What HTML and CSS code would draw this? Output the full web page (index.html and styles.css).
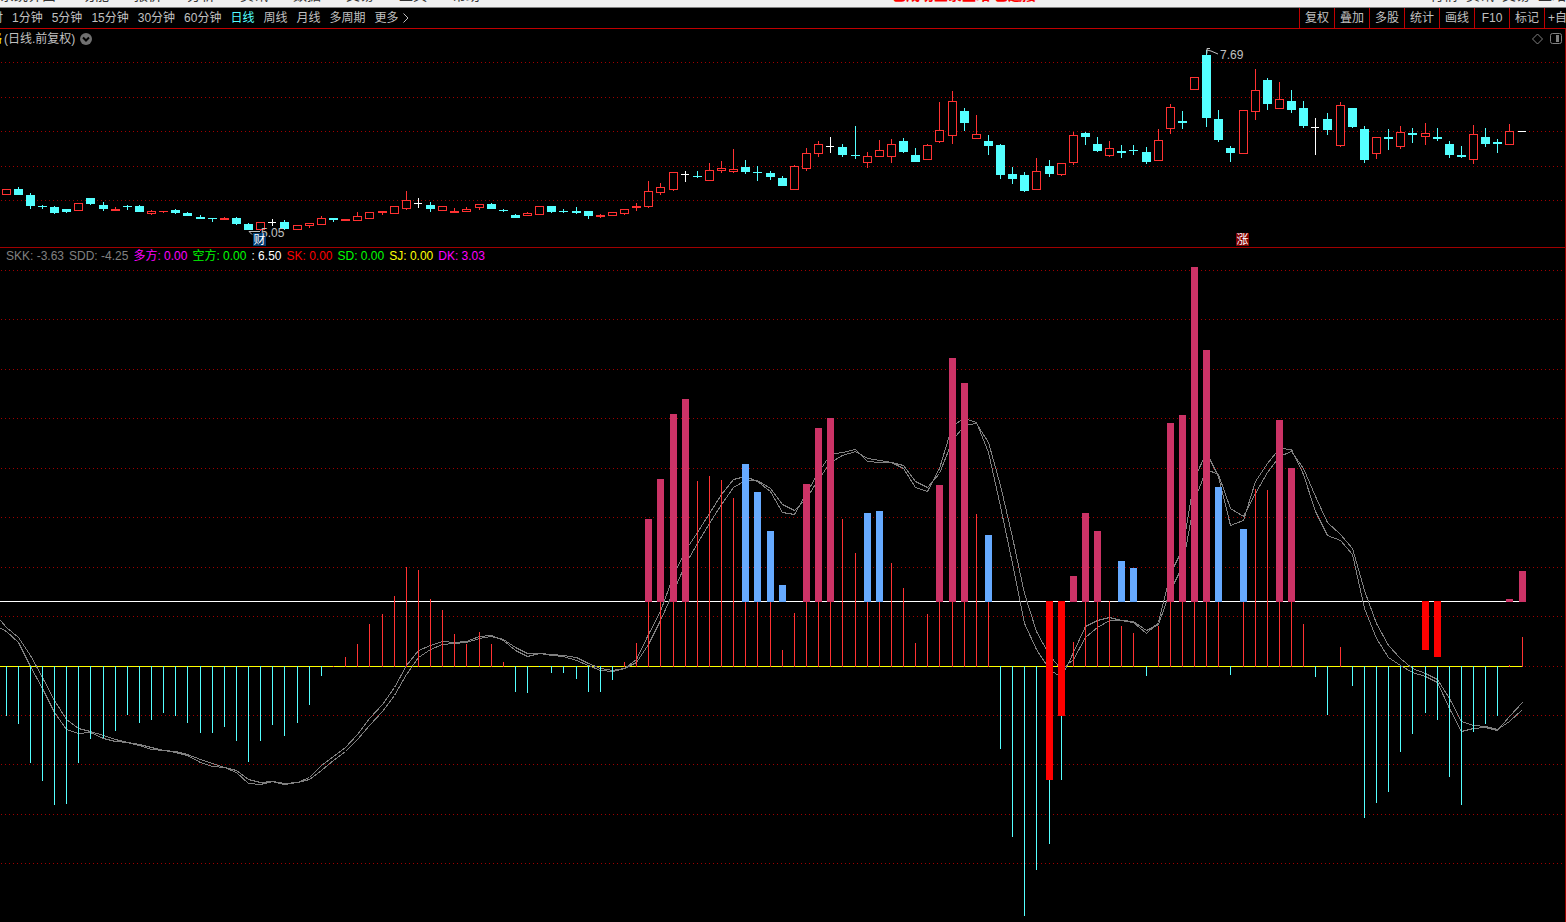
FILE: index.html
```html
<!DOCTYPE html>
<html lang="zh-CN">
<head>
    <meta charset="UTF-8">
    <meta name="viewport" content="width=device-width, initial-scale=1.0">
    <title>日线</title>
    <link rel="stylesheet" href="styles.css">
</head>
<body>
    <!-- Main menu, scrolled almost out of view -->
    <div class="menu-strip">
        <div class="menu-items">
            <span>系统界面</span>
            <span>功能</span>
            <span>报价</span>
            <span>分析</span>
            <span>资讯</span>
            <span>数据</span>
            <span>交易</span>
            <span>工具</span>
            <span>帮助</span>
        </div>
        <div class="menu-notice">已成功登录主站 已连接</div>
        <div class="menu-right">
            <span>行情</span>
            <span>资讯</span>
            <span>交易</span>
            <span>主站</span>
        </div>
    </div>

    <nav class="toolbar">
        <div class="periods">
            <button type="button" class="period cut">时</button>
            <button type="button" class="period">1分钟</button>
            <button type="button" class="period">5分钟</button>
            <button type="button" class="period">15分钟</button>
            <button type="button" class="period">30分钟</button>
            <button type="button" class="period">60分钟</button>
            <button type="button" class="period active">日线</button>
            <button type="button" class="period">周线</button>
            <button type="button" class="period">月线</button>
            <button type="button" class="period">多周期</button>
            <button type="button" class="period more">更多
                <svg width="6" height="10" viewBox="0 0 6 10"><path d="M0.5 0.5 L5 5 L0.5 9.5"/></svg>
            </button>
        </div>
        <div class="tools">
            <button type="button" class="tool">复权</button>
            <button type="button" class="tool">叠加</button>
            <button type="button" class="tool">多股</button>
            <button type="button" class="tool">统计</button>
            <button type="button" class="tool">画线</button>
            <button type="button" class="tool">F10</button>
            <button type="button" class="tool">标记</button>
            <button type="button" class="tool last">+自</button>
        </div>
    </nav>

    <main class="charts">
        <section class="price-panel">
            <header class="panel-title">
                <span class="stock-name">格</span>
                <span>(日线.前复权)</span>
                <svg class="title-toggle" width="12" height="12" viewBox="0 0 12 12">
                    <circle cx="6" cy="6" r="6"/>
                    <path d="M3 4.5 L6 7.5 L9 4.5"/>
                </svg>
                <svg class="title-icons" width="30" height="12" viewBox="0 0 30 12">
                    <path d="M5.5 1 L10.5 6 L5.5 11 L0.5 6 Z"/>
                    <rect x="18.5" y="0.5" width="11" height="10" rx="2"/>
                    <rect class="fill" x="24" y="2" width="3" height="7"/>
                </svg>
            </header>
            <svg id="priceChart"></svg>
        </section>

        <section class="indicator-panel">
            <div class="legend">
                <span class="gray">SKK: -3.63</span>
                <span class="gray">SDD: -4.25</span>
                <span class="magenta">多方: 0.00</span>
                <span class="green">空方: 0.00</span>
                <span class="white">: 6.50</span>
                <span class="red">SK: 0.00</span>
                <span class="green">SD: 0.00</span>
                <span class="yellow">SJ: 0.00</span>
                <span class="magenta">DK: 3.03</span>
            </div>
            <svg id="indicatorChart"></svg>
        </section>
    </main>

    <script src="chart.js"></script>
</body>
</html>
```

FILE: styles.css
```css
/* General Styles */
* {
    box-sizing: border-box;
}

body {
    margin: 0;
    height: 100vh;
    display: flex;
    flex-direction: column;
    overflow: hidden;
    background: #000;
    color: #c0c0c0;
    font-family: "Liberation Sans", "Noto Sans CJK SC", sans-serif;
    font-size: 12px;
}

button {
    padding: 0;
    border: none;
    background: none;
    color: inherit;
    font: inherit;
    line-height: 21px;
    white-space: nowrap;
    cursor: pointer;
}

svg {
    display: block;
}

/* Menu strip */
.menu-strip {
    flex: none;
    display: flex;
    align-items: flex-end;
    justify-content: space-between;
    height: 8px;
    padding-bottom: 4px;
    overflow: hidden;
    background: #f0f0f0;
    border-bottom: 1px solid #808080;
    color: #333;
    font-size: 14px;
    line-height: 16px;
    white-space: nowrap;
}

.menu-items,
.menu-right {
    display: flex;
    gap: 25px;
}

.menu-right {
    gap: 8px;
}

.menu-notice {
    flex: 1;
    padding-left: 412px;
    color: #f00;
    font-weight: bold;
}

/* Toolbar */
.toolbar {
    flex: none;
    display: flex;
    justify-content: space-between;
    height: 21px;
    overflow: hidden;
    border-bottom: 1px solid #c00000;
}

.periods {
    display: flex;
    gap: 9px;
}

.period.cut {
    width: 3px;
    direction: rtl;
    overflow: hidden;
}

.period.active {
    color: #54ffff;
}

.period.more {
    display: flex;
    align-items: center;
    gap: 4px;
}

.period svg {
    fill: none;
    stroke: #c0c0c0;
}

.tools {
    display: flex;
}

.tool {
    width: 35px;
    border-left: 1px solid #c00000;
}

.tool.last {
    width: 22px;
    padding-left: 3px;
    overflow: hidden;
    text-align: left;
}

/* Charts */
.charts {
    flex: 1;
    min-height: 0;
    display: flex;
    flex-direction: column;
    border-right: 1px solid #a00000;
}

.price-panel {
    flex: none;
    border-bottom: 1px solid #a00000;
}

.panel-title {
    display: flex;
    align-items: center;
    height: 19px;
    line-height: 20px;
}

.stock-name {
    width: 2px;
    margin-right: 2px;
    overflow: hidden;
    direction: rtl;
    color: #ff0;
    white-space: nowrap;
}

.title-toggle {
    margin-left: 5px;
    fill: #707070;
}

.title-toggle path {
    fill: none;
    stroke: #000;
    stroke-width: 2;
}

.title-icons {
    margin-left: auto;
    margin-right: 3px;
    fill: none;
    stroke: #808080;
}

.title-icons .fill {
    fill: #808080;
    stroke: none;
}

#priceChart {
    width: 100%;
    height: 199px;
}

.indicator-panel {
    flex: 1;
    min-height: 0;
    display: flex;
    flex-direction: column;
}

.legend {
    flex: none;
    display: flex;
    gap: 5px;
    height: 16px;
    padding-left: 6px;
    line-height: 16px;
    white-space: nowrap;
}

#indicatorChart {
    flex: 1;
    min-height: 0;
    width: 100%;
}

.gray { color: #808080; }
.magenta { color: #f0f; }
.green { color: #0f0; }
.white { color: #fff; }
.red { color: #f00; }
.yellow { color: #ff0; }

/* Chart shapes */
.grid {
    stroke: #a00000;
    stroke-dasharray: 1 3;
    stroke-dashoffset: -1;
    shape-rendering: crispEdges;
}

.curve {
    fill: none;
    stroke: #808080;
    shape-rendering: crispEdges;
}

.up {
    fill: #ff3232;
}

.up-body {
    fill: #000;
    stroke: #ff3232;
}

.down {
    fill: #54ffff;
}

.flat {
    fill: #fff;
}

.zero {
    fill: #ff0;
}

.bar-strong {
    fill: #cc3366;
}

.bar-weak {
    fill: #66aaff;
}

.bar-below {
    fill: #f00;
}

.mark {
    fill: none;
    stroke: #c0c0c0;
}

.mark-text {
    fill: #c0c0c0;
}

.badge-text {
    fill: #fff;
    font-size: 12px;
    text-anchor: middle;
}

.badge-news {
    fill: #003a70;
}

.badge-rise {
    fill: #800000;
}
```

FILE: chart.js
```js
const NS = 'http://www.w3.org/2000/svg';
const priceChart = document.getElementById('priceChart');
const indicatorChart = document.getElementById('indicatorChart');

// [type, high, body top, body bottom, low]  r = up, c = down, w = flat
const candles = [
    ['r', 189, 189, 195, 195], ['c', 187, 189, 195, 195], ['c', 193, 195, 206, 209], ['c', 205, 206, 207, 209],
    ['c', 206, 207, 213, 214], ['c', 209, 209, 212, 213], ['r', 203, 203, 211, 211], ['c', 198, 198, 204, 205],
    ['c', 202, 205, 209, 211], ['r', 207, 209, 211, 211], ['c', 205, 206, 207, 210], ['c', 205, 206, 212, 212],
    ['r', 210, 211, 214, 215], ['r', 211, 211, 212, 213], ['c', 209, 210, 213, 214], ['c', 212, 213, 216, 216],
    ['c', 215, 217, 219, 219], ['c', 218, 218, 219, 222], ['r', 217, 218, 220, 220], ['c', 217, 218, 224, 225],
    ['c', 223, 224, 230, 230], ['r', 222, 222, 230, 231], ['w', 219, 222, 223, 226], ['c', 220, 222, 229, 230],
    ['r', 225, 225, 230, 230], ['r', 223, 223, 226, 228], ['r', 216, 218, 225, 225], ['c', 218, 218, 220, 222],
    ['r', 219, 219, 221, 221], ['r', 212, 216, 221, 221], ['r', 212, 212, 219, 219], ['r', 211, 211, 213, 215],
    ['r', 206, 206, 214, 214], ['r', 191, 200, 209, 210], ['w', 198, 203, 204, 208], ['c', 202, 205, 209, 212],
    ['r', 206, 206, 211, 211], ['r', 208, 211, 213, 213], ['r', 207, 209, 212, 212], ['r', 204, 204, 208, 210],
    ['c', 203, 204, 209, 209], ['c', 209, 210, 211, 212], ['c', 214, 215, 218, 218], ['r', 212, 213, 216, 216],
    ['r', 206, 206, 215, 215], ['c', 206, 206, 212, 213], ['c', 209, 211, 212, 213], ['c', 207, 211, 213, 214],
    ['c', 211, 211, 216, 219], ['r', 214, 215, 217, 218], ['r', 212, 212, 216, 216], ['r', 209, 209, 214, 215],
    ['r', 203, 206, 208, 211], ['r', 181, 191, 207, 208], ['r', 183, 187, 193, 195], ['r', 172, 172, 190, 191],
    ['w', 171, 174, 175, 182], ['c', 171, 176, 177, 178], ['r', 163, 170, 181, 181], ['r', 161, 168, 171, 173],
    ['r', 149, 169, 172, 173], ['c', 160, 167, 172, 174], ['c', 166, 172, 173, 181], ['c', 171, 173, 177, 180],
    ['c', 176, 178, 186, 186], ['r', 165, 166, 190, 190], ['r', 148, 153, 169, 171], ['r', 141, 144, 154, 157],
    ['w', 137, 146, 147, 153], ['c', 144, 147, 155, 157], ['c', 126, 155, 156, 159], ['r', 152, 156, 163, 168],
    ['r', 140, 150, 157, 157], ['r', 139, 144, 157, 163], ['c', 138, 141, 152, 153], ['c', 148, 155, 162, 162],
    ['r', 144, 145, 160, 160], ['r', 102, 130, 142, 143], ['r', 91, 101, 136, 144], ['c', 108, 111, 123, 131],
    ['r', 115, 134, 139, 139], ['c', 135, 141, 146, 155], ['c', 144, 145, 175, 179], ['c', 167, 174, 179, 184],
    ['c', 172, 175, 191, 192], ['r', 158, 171, 190, 190], ['c', 160, 166, 174, 177], ['r', 163, 163, 175, 176],
    ['r', 132, 135, 163, 165], ['c', 132, 133, 137, 145], ['c', 137, 144, 151, 152], ['r', 141, 148, 156, 157],
    ['c', 145, 151, 153, 158], ['c', 145, 150, 151, 155], ['c', 147, 152, 162, 164], ['r', 129, 140, 161, 161],
    ['r', 104, 107, 129, 134], ['c', 111, 121, 123, 129], ['r', 77, 77, 90, 90], ['c', 50, 55, 118, 127],
    ['c', 110, 119, 140, 142], ['c', 146, 148, 153, 162], ['r', 110, 110, 154, 154], ['r', 69, 90, 112, 120],
    ['c', 78, 80, 104, 110], ['r', 82, 99, 109, 109], ['c', 90, 101, 110, 113], ['c', 101, 108, 126, 128],
    ['w', 118, 127, 128, 155], ['c', 113, 119, 130, 135], ['r', 102, 105, 146, 147], ['c', 108, 108, 127, 128],
    ['c', 126, 129, 160, 163], ['r', 137, 137, 154, 159], ['c', 129, 137, 139, 150], ['r', 126, 132, 147, 149],
    ['c', 128, 133, 135, 143], ['r', 123, 133, 137, 145], ['c', 128, 137, 139, 141], ['c', 141, 144, 155, 158],
    ['c', 146, 155, 157, 158], ['r', 125, 134, 160, 164], ['c', 128, 137, 144, 147], ['c', 139, 142, 144, 153],
    ['r', 124, 131, 145, 145], ['w', 131, 131, 132, 132]
];

const ZERO = 666;
const BASE = 601;

// Tip of each thin stick, measured from the zero line
const sticks = [
    716, 724, 763, 781, 805, 804, 763, 739, 738, 731, 715, 723, 720, 713, 716, 723,
    733, 733, 727, 741, 762, 741, 725, 736, 723, 705, 676, 666, 657, 644, 624, 614,
    596, 567, 570, 599, 610, 634, 644, 632, 644, 662, 692, 693, 667, 673, 673, 679,
    692, 692, 680, 662, 643, 601, 601, 601, 601, 481, 476, 480, 498, 601, 601, 601,
    650, 613, 601, 601, 601, 519, 553, 601, 601, 563, 588, 643, 614, 601, 601, 601,
    514, 601, 749, 837, 916, 870, 844, 780, 642, 601, 601, 601, 626, 633, 676, 626,
    601, 601, 601, 601, 601, 675, 601, 489, 490, 601, 601, 624, 677, 715, 647, 686,
    818, 803, 792, 752, 734, 713, 720, 777, 805, 732, 724, 716, 665, 637
];

// Thick bars on the base line: [index, tip]
const strongBars = [
    [53, 519], [54, 479], [55, 414], [56, 399], [66, 484], [67, 428], [68, 418],
    [77, 485], [78, 358], [79, 383], [88, 576], [89, 513], [90, 531], [96, 423],
    [97, 415], [98, 267], [99, 350], [105, 420], [106, 468], [124, 599], [125, 571]
];
const weakBars = [
    [61, 464], [62, 492], [63, 531], [64, 585], [71, 513], [72, 511],
    [81, 535], [92, 561], [93, 568], [100, 487], [102, 529]
];
const belowBars = [[86, 780], [87, 716], [117, 650], [118, 657]];

const skk = [
    631, 642, 666, 688, 712, 729, 733, 732, 738, 741, 742, 745, 749, 750, 752, 755,
    762, 766, 767, 772, 783, 784, 781, 784, 782, 777, 765, 756, 747, 734, 718, 704,
    687, 665, 650, 645, 641, 642, 641, 636, 635, 640, 650, 656, 653, 655, 656, 660,
    665, 670, 671, 668, 659, 634, 611, 575, 550, 532, 513, 494, 479, 476, 481, 491,
    512, 514, 493, 472, 454, 452, 449, 461, 462, 462, 468, 487, 491, 468, 425, 418,
    422, 452, 506, 563, 623, 649, 669, 677, 652, 626, 620, 617, 620, 622, 633, 622,
    573, 549, 478, 452, 476, 525, 520, 481, 463, 448, 449, 474, 511, 535, 540, 554,
    608, 638, 657, 665, 672, 676, 682, 708, 731, 728, 727, 730, 716, 702
];
const sdd = [
    627, 637, 655, 677, 700, 719, 728, 731, 735, 739, 742, 744, 747, 750, 751, 754,
    759, 763, 767, 770, 779, 782, 781, 783, 782, 779, 770, 760, 751, 739, 725, 711,
    695, 674, 657, 649, 644, 643, 642, 638, 636, 639, 647, 653, 653, 654, 655, 657,
    663, 668, 670, 668, 662, 644, 620, 591, 564, 543, 523, 504, 487, 480, 480, 488,
    504, 510, 498, 479, 462, 455, 451, 458, 460, 462, 465, 481, 487, 473, 440, 425,
    423, 442, 485, 537, 593, 631, 655, 669, 659, 637, 627, 620, 620, 621, 630, 624,
    590, 566, 500, 469, 474, 508, 516, 493, 472, 456, 451, 468, 496, 522, 534, 548,
    590, 623, 645, 658, 668, 673, 679, 698, 721, 725, 726, 729, 721, 709
];

function add(parent, tag, attrs, text) {
    const el = document.createElementNS(NS, tag);
    for (const key in attrs) {
        el.setAttribute(key, attrs[key]);
    }
    if (text) {
        el.textContent = text;
    }
    parent.appendChild(el);
    return el;
}

function rect(parent, cls, x, y, width, height) {
    return add(parent, 'rect', { class: cls, x, y, width, height });
}

function grid(parent, rows, width) {
    rows.forEach((y) => {
        add(parent, 'line', { class: 'grid', x1: 0, x2: width - 2, y1: y + 0.5, y2: y + 0.5 });
    });
}

function xAt(i) {
    const step = priceChart.clientWidth / 129.04;
    return Math.floor(6.04 + i * step);
}

function drawPrice() {
    const svg = priceChart;
    const width = svg.clientWidth;
    svg.innerHTML = '';
    svg.setAttribute('viewBox', `0 48 ${width} ${svg.clientHeight}`);
    grid(svg, [62, 97, 131, 166, 200], width);

    candles.forEach(([type, high, top, bottom, low], i) => {
        const x = xAt(i);
        const cls = { r: 'up', c: 'down', w: 'flat' }[type];
        rect(svg, cls, x, high, 1, low - high);
        if (type === 'r' && bottom - top > 2) {
            rect(svg, 'up-body', x - 3.5, top + 0.5, 8, bottom - top - 1);
        } else {
            rect(svg, cls, x - 4, top, type === 'w' ? 8 : 9, bottom - top);
        }
    });

    // Highest and lowest price
    const hi = xAt(99);
    add(svg, 'path', { class: 'mark', d: `M${hi + 4} 48.5 h-3 v5 M${hi + 1} 50 l4 1 l7 3` });
    add(svg, 'text', { class: 'mark-text', x: hi + 14, y: 59 }, '7.69');
    const lo = xAt(20);
    add(svg, 'path', { class: 'mark', d: `M${lo + 12} 231.5 h-11 l3 3` });
    add(svg, 'text', { class: 'mark-text', x: lo + 13, y: 237 }, '5.05');

    rect(svg, 'badge-news', lo + 5, 233, 13, 13);
    add(svg, 'text', { class: 'badge-text', x: lo + 11.5, y: 244 }, '财');
    const rise = xAt(102);
    rect(svg, 'badge-rise', rise - 7, 233, 13, 13);
    add(svg, 'text', { class: 'badge-text', x: rise - 0.5, y: 244 }, '涨');
}

function curve(svg, start, values) {
    const points = values.map((y, i) => `${xAt(i) + 0.5},${y + 0.5}`);
    add(svg, 'polyline', { class: 'curve', points: `0,${start} ${points.join(' ')}` });
}

function drawIndicator() {
    const svg = indicatorChart;
    const width = svg.clientWidth;
    const end = xAt(candles.length - 1);
    svg.innerHTML = '';
    svg.setAttribute('viewBox', `0 264 ${width} ${svg.clientHeight}`);
    grid(svg, [270, 319, 369, 418, 468, 517, 567, 616, 666, 715, 764, 814, 863], width);

    rect(svg, 'flat', 0, BASE, end, 1);
    rect(svg, 'zero', 0, ZERO, end, 1);
    curve(svg, 628, skk);
    curve(svg, 620, sdd);

    sticks.forEach((tip, i) => {
        if (tip > ZERO) {
            rect(svg, 'down', xAt(i), ZERO, 1, tip - ZERO);
        } else {
            rect(svg, 'up', xAt(i), tip, 1, ZERO + 1 - tip);
        }
    });

    strongBars.forEach(([i, tip]) => rect(svg, 'bar-strong', xAt(i) - 3, tip, 7, BASE + 1 - tip));
    weakBars.forEach(([i, tip]) => rect(svg, 'bar-weak', xAt(i) - 3, tip, 7, BASE + 1 - tip));
    belowBars.forEach(([i, tip]) => rect(svg, 'bar-below', xAt(i) - 3, BASE, 7, tip - BASE));
}

function draw() {
    drawPrice();
    drawIndicator();
}

window.addEventListener('resize', draw);
draw();
```
